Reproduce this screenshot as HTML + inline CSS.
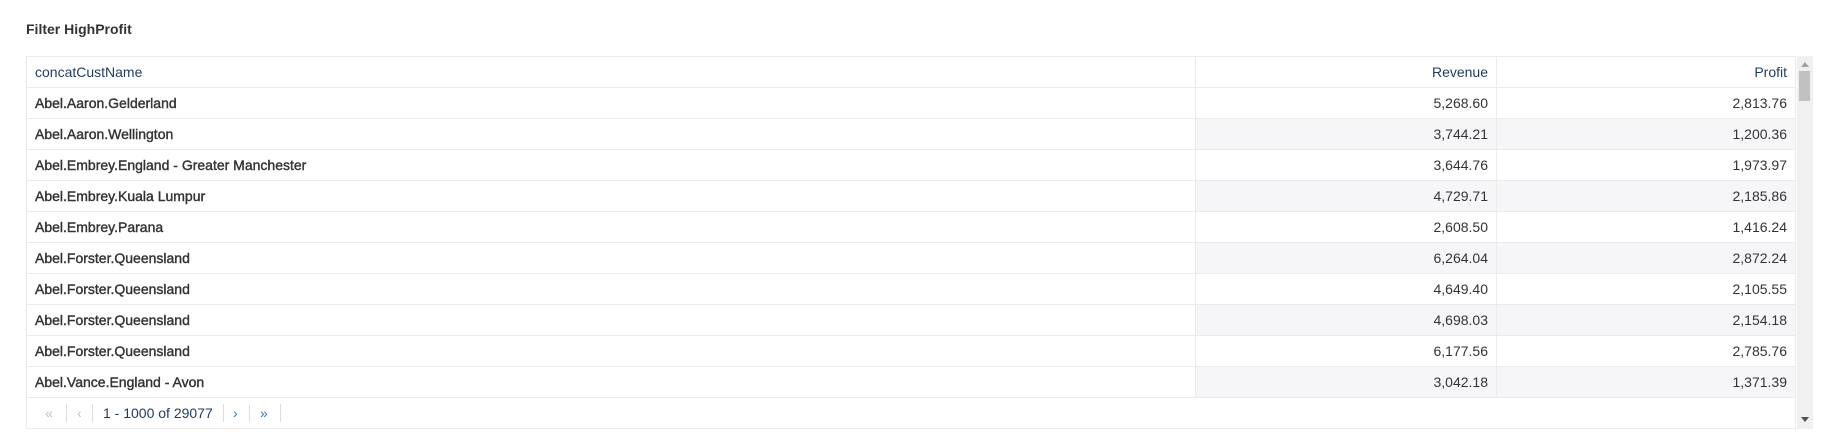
<!DOCTYPE html>
<html><head><style>
*{margin:0;padding:0;box-sizing:border-box}
body{width:1838px;height:448px;background:#fff;font-family:"Liberation Sans",Arial,sans-serif;position:relative;overflow:hidden}
.title{position:absolute;left:26px;top:21px;font-size:14px;font-weight:bold;color:#333}
.tbl{position:absolute;left:26px;top:56px;width:1770px;height:373px;border:1px solid #ebebeb}
.row{position:absolute;left:0;width:1768px;height:31px;border-bottom:1px solid #ebebeb}
.c{position:absolute;top:0;height:30px;line-height:30px;font-size:14px;color:#333;padding:0 8px;white-space:nowrap}
.c1{left:0;width:1168px;-webkit-text-stroke:0.4px #333}
.c2{left:1168px;width:301px;text-align:right;border-left:1px solid #ebebeb}
.c3{left:1469px;width:299px;text-align:right;border-left:1px solid #ebebeb}
.alt .c2,.alt .c3{background:#f6f6f8}
.hdr .c{color:#1f3b5c;-webkit-text-stroke:0}
.sb{position:absolute;left:1797px;top:56px;width:16px;height:373px;background:#f0f0f0}
.th{position:absolute;left:2px;top:15px;width:11px;height:30px;background:#c1c1c1}
.pg{position:absolute;left:0;top:341px;height:31px;width:400px;font-size:14px;color:#1f3b5c}
.pg span{position:absolute;top:7px;white-space:nowrap}
.sep{position:absolute;top:6px;width:1px;height:18px;background:#ddd}
</style></head><body>
<div class="title">Filter HighProfit</div>
<div class="tbl">
<div class="row hdr" style="top:0"><div class="c c1">concatCustName</div><div class="c c2">Revenue</div><div class="c c3">Profit</div></div>
<div class="row" style="top:31px"><div class="c c1">Abel.Aaron.Gelderland</div><div class="c c2">5,268.60</div><div class="c c3">2,813.76</div></div>
<div class="row alt" style="top:62px"><div class="c c1">Abel.Aaron.Wellington</div><div class="c c2">3,744.21</div><div class="c c3">1,200.36</div></div>
<div class="row" style="top:93px"><div class="c c1">Abel.Embrey.England - Greater Manchester</div><div class="c c2">3,644.76</div><div class="c c3">1,973.97</div></div>
<div class="row alt" style="top:124px"><div class="c c1">Abel.Embrey.Kuala Lumpur</div><div class="c c2">4,729.71</div><div class="c c3">2,185.86</div></div>
<div class="row" style="top:155px"><div class="c c1">Abel.Embrey.Parana</div><div class="c c2">2,608.50</div><div class="c c3">1,416.24</div></div>
<div class="row alt" style="top:186px"><div class="c c1">Abel.Forster.Queensland</div><div class="c c2">6,264.04</div><div class="c c3">2,872.24</div></div>
<div class="row" style="top:217px"><div class="c c1">Abel.Forster.Queensland</div><div class="c c2">4,649.40</div><div class="c c3">2,105.55</div></div>
<div class="row alt" style="top:248px"><div class="c c1">Abel.Forster.Queensland</div><div class="c c2">4,698.03</div><div class="c c3">2,154.18</div></div>
<div class="row" style="top:279px"><div class="c c1">Abel.Forster.Queensland</div><div class="c c2">6,177.56</div><div class="c c3">2,785.76</div></div>
<div class="row alt" style="top:310px"><div class="c c1">Abel.Vance.England - Avon</div><div class="c c2">3,042.18</div><div class="c c3">1,371.39</div></div>
<div class="pg">
<span style="left:18px;color:#a8c4e0">«</span><div class="sep" style="left:39px"></div>
<span style="left:50px;color:#a8c4e0">‹</span><div class="sep" style="left:65px"></div>
<span style="left:76px">1 - 1000 of 29077</span><div class="sep" style="left:196px"></div>
<span style="left:206px;color:#3a78b5">›</span><div class="sep" style="left:222px"></div>
<span style="left:233px;color:#3a78b5">»</span><div class="sep" style="left:253px"></div>
</div>
</div>
<div class="sb"><div class="th"></div>
<svg style="position:absolute;left:4px;top:6px" width="8" height="5"><path d="M0 5L4 0L8 5Z" fill="#a0a0a0"/></svg>
<svg style="position:absolute;left:4px;top:361px" width="8" height="5"><path d="M0 0L8 0L4 5Z" fill="#505050"/></svg>
</div>
</body></html>
